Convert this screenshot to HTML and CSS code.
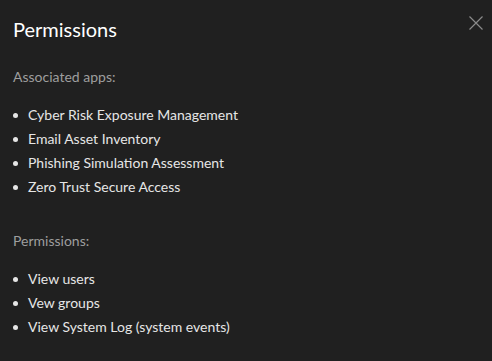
FILE: index.html
```html
<!DOCTYPE html>
<html lang="en">
<head>
  <meta charset="UTF-8" />
  <title>Permissions</title>
  <link rel="stylesheet" href="styles.css">
</head>
<body>
  <div class="panel">
    <header class="panel-header">
      <h1>Permissions</h1>
      <button class="close-btn" aria-label="Close">
        <svg width="16" height="16" viewBox="0 0 16 16">
          <path d="M1.5 1.5 L14.5 14.5 M14.5 1.5 L1.5 14.5" stroke="#8a8a8a" stroke-width="1.2" fill="none"/>
        </svg>
      </button>
    </header>

    <section class="group">
      <div class="label">Associated apps:</div>
      <ul class="items">
        <li>Cyber Risk Exposure Management</li>
        <li>Email Asset Inventory</li>
        <li>Phishing Simulation Assessment</li>
        <li>Zero Trust Secure Access</li>
      </ul>
    </section>

    <section class="group">
      <div class="label">Permissions:</div>
      <ul class="items">
        <li>View users</li>
        <li>Vew groups</li>
        <li>View System Log (system events)</li>
      </ul>
    </section>
  </div>
</body>
</html>
```

FILE: styles.css
```css
body {
  margin: 0;
  background: #202020;
  color: #e6e6e6;
  font-family: 'Lato', sans-serif;
}
.panel {
  padding: 14px 8px 0 13px;
}
.panel-header {
  display: flex;
  justify-content: space-between;
  align-items: flex-start;
}
.panel-header h1 {
  margin: 0;
  font-size: 20px;
  font-weight: normal;
  line-height: 30px;
  color: #ffffff;
}
.close-btn {
  background: none;
  border: none;
  padding: 0;
  margin: 1px 0 0 0;
  cursor: pointer;
  line-height: 0;
}
.group {
  margin-top: 23px;
}
.group + .group {
  margin-top: 32px;
}
.label {
  font-size: 14px;
  line-height: 20px;
  color: #9e9e9e;
}
.items {
  list-style: none;
  padding: 0;
  margin: 16px 0 0 0;
}
.items li {
  position: relative;
  padding-left: 15px;
  font-size: 14px;
  line-height: 24px;
}
.items li::before {
  content: "";
  position: absolute;
  left: 0;
  top: 10px;
  width: 5px;
  height: 5px;
  border-radius: 50%;
  background: #e6e6e6;
}
```
